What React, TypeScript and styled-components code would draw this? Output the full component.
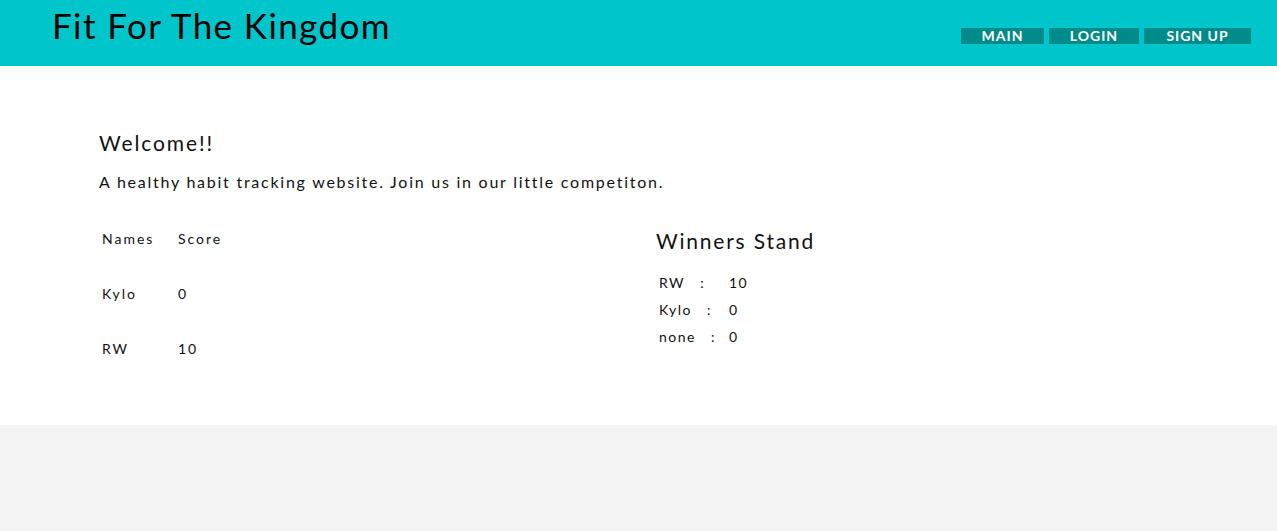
import React from "react";
import styled, { createGlobalStyle } from "styled-components";

const Global = createGlobalStyle`
  html, body { margin: 0; padding: 0; background: #f4f4f4; }
  body { font-family: "Lato", "Open Sans", sans-serif; color: #111; }
`;

const Header = styled.header`
  height: 66px;
  background: #00c5ca;
  display: flex;
  align-items: flex-start;
  justify-content: space-between;
  padding: 0 26px 0 52px;
`;

const Title = styled.h1`
  margin: 0;
  padding-top: 5px;
  font-size: 35px;
  font-weight: 400;
  letter-spacing: 1.4px;
  color: #000;
  line-height: 40px;
`;

const Nav = styled.nav`
  display: flex;
  gap: 5px;
  margin-top: 28px;
`;

const NavButton = styled.a<{ $w: number }>`
  width: ${(p) => p.$w}px;
  height: 16px;
  background: #008b8b;
  color: #fff;
  font-size: 14px;
  font-weight: 700;
  letter-spacing: 1px;
  line-height: 16px;
  text-align: center;
  text-decoration: none;
`;

const Main = styled.main`
  background: #fff;
  height: 359px;
  box-sizing: border-box;
  padding: 64px 99px 0 99px;
`;

const Welcome = styled.h2`
  margin: 0;
  font-size: 21px;
  font-weight: 400;
  letter-spacing: 1.9px;
  line-height: 26px;
`;

const Intro = styled.p`
  margin: 14px 0 0;
  font-size: 16px;
  letter-spacing: 1.75px;
  line-height: 24px;
`;

const Columns = styled.div`
  display: grid;
  grid-template-columns: 557px 1fr;
  margin-top: 30px;
`;

const Table = styled.table`
  border-collapse: collapse;
  font-size: 14px;
  letter-spacing: 2px;
`;

const Cell = styled.td<{ $w?: number }>`
  padding: 0 3px;
  height: 55px;
  width: ${(p) => (p.$w ? `${p.$w}px` : "auto")};
  vertical-align: middle;
`;

const HeadCell = styled.th<{ $w?: number }>`
  padding: 0 3px 14px;
  height: 28px;
  width: ${(p) => (p.$w ? `${p.$w}px` : "auto")};
  font-weight: 400;
  text-align: left;
  vertical-align: middle;
`;

const Stand = styled.section`
  padding-top: 4px;
`;

const StandTitle = styled.h3`
  margin: 0;
  font-size: 21px;
  font-weight: 400;
  letter-spacing: 1.8px;
  line-height: 26px;
`;

const StandList = styled.div`
  margin-top: 15px;
  padding-left: 3px;
  display: grid;
  grid-template-columns: 70px auto;
  font-size: 14px;
  letter-spacing: 1.5px;
  line-height: 27px;
`;

const Colon = styled.span`
  margin-left: 15px;
`;

const Footer = styled.div`
  height: 106px;
  background: #f4f4f4;
`;

const scores = [
  { name: "Kylo", score: 0 },
  { name: "RW", score: 10 },
];

const winners = [
  { name: "RW", score: 10 },
  { name: "Kylo", score: 0 },
  { name: "none", score: 0 },
];

export default function App() {
  return (
    <>
      <Global />
      <Header>
        <Title>Fit For The Kingdom</Title>
        <Nav>
          <NavButton $w={83} href="#">MAIN</NavButton>
          <NavButton $w={90} href="#">LOGIN</NavButton>
          <NavButton $w={107} href="#">SIGN UP</NavButton>
        </Nav>
      </Header>
      <Main>
        <Welcome>Welcome!!</Welcome>
        <Intro>A healthy habit tracking website. Join us in our little competiton.</Intro>
        <Columns>
          <Table>
            <thead>
              <tr>
                <HeadCell $w={70}>Names</HeadCell>
                <HeadCell>Score</HeadCell>
              </tr>
            </thead>
            <tbody>
              {scores.map((s) => (
                <tr key={s.name}>
                  <Cell $w={70}>{s.name}</Cell>
                  <Cell>{s.score}</Cell>
                </tr>
              ))}
            </tbody>
          </Table>
          <Stand>
            <StandTitle>Winners Stand</StandTitle>
            <StandList>
              {winners.map((w) => (
                <React.Fragment key={w.name}>
                  <span>
                    {w.name}
                    <Colon>:</Colon>
                  </span>
                  <span>{w.score}</span>
                </React.Fragment>
              ))}
            </StandList>
          </Stand>
        </Columns>
      </Main>
      <Footer />
    </>
  );
}
